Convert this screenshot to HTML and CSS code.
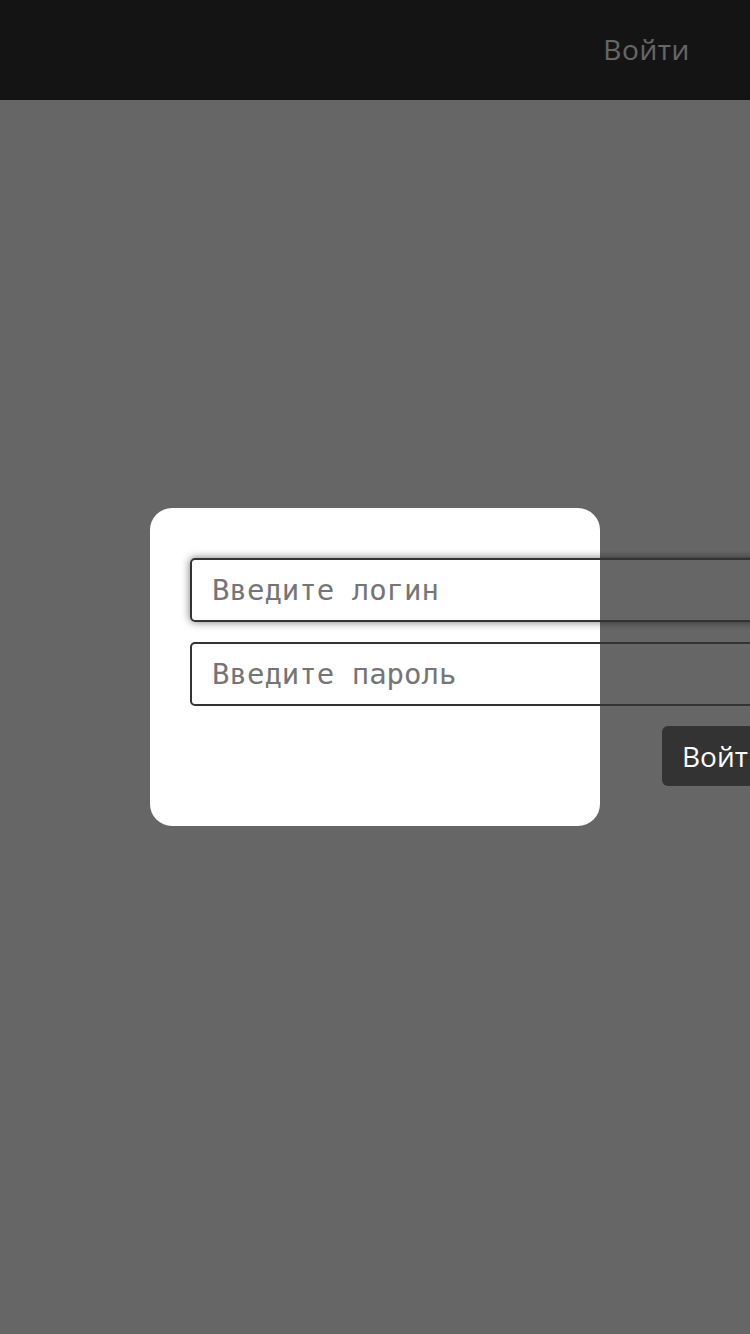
FILE: index.html
```html
<!DOCTYPE html>
<html lang="ru">
<head>
<meta charset="utf-8">
<title>Вход</title>
<link rel="stylesheet" href="styles.css">
</head>
<body>
<header class="topbar">
  <a class="topbar-link" href="#">Войти</a>
</header>
<main class="page"></main>
<div class="overlay">
  <form class="modal">
    <input class="field field-focus" type="text" placeholder="Введите логин">
    <input class="field" type="password" placeholder="Введите пароль">
    <button class="submit" type="button">Войти</button>
  </form>
</div>
</body>
</html>
```

FILE: styles.css
```css
* { box-sizing: border-box; }
html, body {
  margin: 0;
  padding: 0;
  width: 750px;
  height: 1334px;
  overflow: hidden;
  background: #ffffff;
  font-family: "Open Sans", "Noto Sans", sans-serif;
}
.topbar {
  height: 100px;
  background: #333333;
  display: flex;
  align-items: center;
  justify-content: flex-end;
  padding-right: 60px;
}
.topbar-link {
  color: #ffffff;
  text-decoration: none;
  font-size: 28px;
  line-height: 1;
  letter-spacing: 0.6px;
  margin-bottom: 2px;
}
.overlay {
  position: fixed;
  inset: 0;
  background: rgba(0, 0, 0, 0.6);
  display: flex;
  align-items: center;
  justify-content: center;
}
.modal {
  width: 450px;
  height: 318px;
  background: #ffffff;
  border-radius: 22px;
  padding: 50px 40px 40px 40px;
  display: flex;
  flex-direction: column;
  align-items: flex-start;
  gap: 20px;
  margin: 0;
}
.field {
  flex: none;
  width: 600px;
  height: 64px;
  border: 2px solid #333333;
  border-radius: 5px;
  background: transparent;
  padding: 0 20px;
  font-family: "DejaVu Sans Mono", monospace;
  font-size: 29px;
  color: #333333;
  outline: none;
}
.field::placeholder {
  color: #757575;
}
.field-focus {
  box-shadow: 0 0 8px rgba(0, 0, 0, 0.55);
}
.submit {
  flex: none;
  align-self: flex-start;
  margin-left: 472px;
  height: 60px;
  padding: 0 20px;
  border: none;
  border-radius: 6px;
  background: #333333;
  color: #ffffff;
  font-family: "Open Sans", "Noto Sans", sans-serif;
  font-size: 28px;
  line-height: 1;
  white-space: nowrap;
}
```
